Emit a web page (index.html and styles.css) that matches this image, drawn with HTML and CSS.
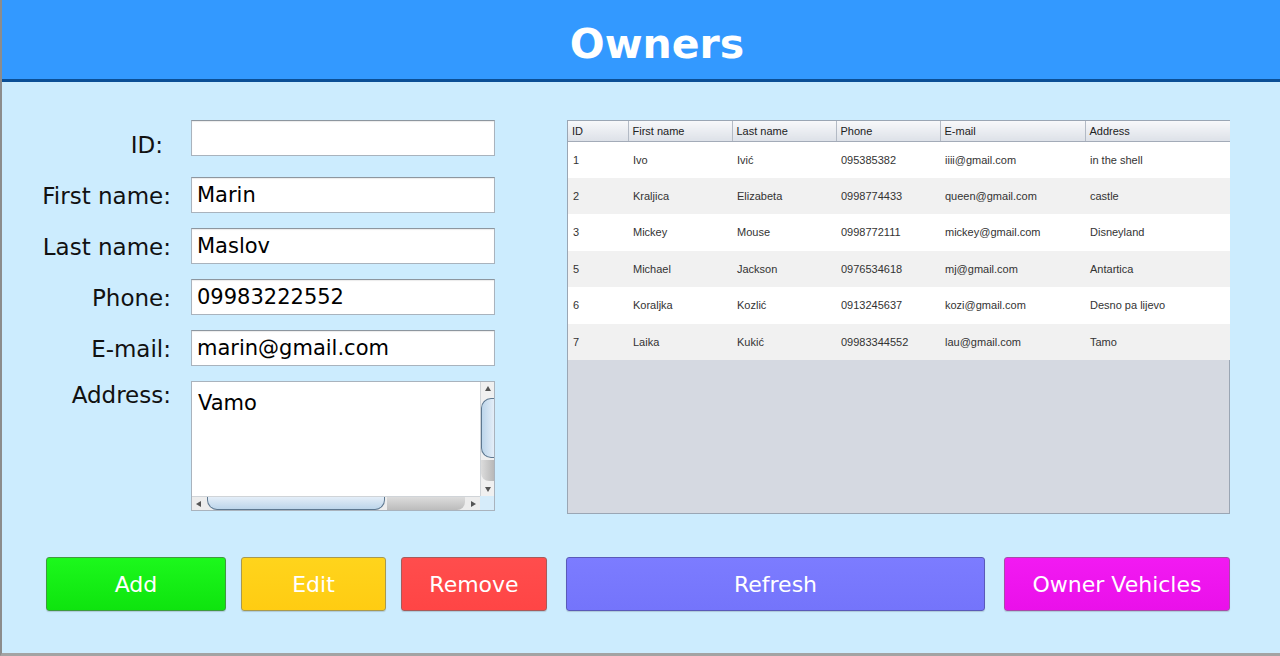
FILE: index.html
```html
<!DOCTYPE html>
<html>
<head>
<meta charset="utf-8">
<link rel="stylesheet" href="styles.css">
</head>
<body>
<div class="window">
  <header class="header"><h1 class="title">Owners</h1></header>
  <main class="main">
    <div class="content">
      <form class="form">
        <label class="label label-id">ID:</label>
        <div class="field field-id"></div>
        <label class="label">First name:</label>
        <div class="field">Marin</div>
        <label class="label">Last name:</label>
        <div class="field">Maslov</div>
        <label class="label">Phone:</label>
        <div class="field">09983222552</div>
        <label class="label">E-mail:</label>
        <div class="field">marin@gmail.com</div>
        <label class="label label-top">Address:</label>
        <div class="textarea">
          <div class="ta-text">Vamo</div>
          <div class="vscroll">
            <span class="arrow arrow-up"></span>
            <span class="vthumb"></span>
            <span class="vrest"></span>
            <span class="arrow arrow-down"></span>
          </div>
          <div class="hscroll">
            <span class="arrow arrow-left"></span>
            <span class="hthumb"></span>
            <span class="hrest"></span>
            <span class="arrow arrow-right"></span>
          </div>
          <div class="corner"></div>
        </div>
      </form>
      <div class="table-wrap">
        <table class="table">
          <colgroup>
            <col class="c-id"><col class="c-mid"><col class="c-mid"><col class="c-mid"><col class="c-wide"><col class="c-wide">
          </colgroup>
          <thead>
            <tr><th>ID</th><th>First name</th><th>Last name</th><th>Phone</th><th>E-mail</th><th>Address</th></tr>
          </thead>
          <tbody>
            <tr><td>1</td><td>Ivo</td><td>Ivić</td><td>095385382</td><td>iiii@gmail.com</td><td>in the shell</td></tr>
            <tr><td>2</td><td>Kraljica</td><td>Elizabeta</td><td>0998774433</td><td>queen@gmail.com</td><td>castle</td></tr>
            <tr><td>3</td><td>Mickey</td><td>Mouse</td><td>0998772111</td><td>mickey@gmail.com</td><td>Disneyland</td></tr>
            <tr><td>5</td><td>Michael</td><td>Jackson</td><td>0976534618</td><td>mj@gmail.com</td><td>Antartica</td></tr>
            <tr><td>6</td><td>Koraljka</td><td>Kozlić</td><td>0913245637</td><td>kozi@gmail.com</td><td>Desno pa lijevo</td></tr>
            <tr><td>7</td><td>Laika</td><td>Kukić</td><td>09983344552</td><td>lau@gmail.com</td><td>Tamo</td></tr>
          </tbody>
        </table>
      </div>
    </div>
    <div class="buttons">
      <button class="btn btn-add">Add</button>
      <button class="btn btn-edit">Edit</button>
      <button class="btn btn-remove">Remove</button>
      <button class="btn btn-refresh">Refresh</button>
      <button class="btn btn-owner">Owner Vehicles</button>
    </div>
  </main>
</div>
</body>
</html>
```
FILE: styles.css
```css
* { box-sizing: border-box; }
html, body { margin: 0; padding: 0; }
body {
  width: 1280px;
  height: 656px;
  overflow: hidden;
  font-family: "DejaVu Sans", Verdana, sans-serif;
  background: #ccecfe;
}
.window {
  width: 1280px;
  height: 656px;
  border-left: 2px solid #8c8c8c;
  border-bottom: 3px solid #a3a3a3;
  display: flex;
  flex-direction: column;
  background: #ccecfe;
}
.header {
  height: 82px;
  flex: none;
  background: #3399ff;
  border-bottom: 3px solid #0b4f96;
  display: flex;
  align-items: center;
  justify-content: center;
  padding-left: 32px;
  padding-top: 10px;
}
.title {
  margin: 0;
  color: #ffffff;
  font-size: 41px;
  font-weight: bold;
  line-height: 1;
}
.main {
  flex: 1;
  display: flex;
  flex-direction: column;
}
.content {
  display: flex;
  align-items: flex-start;
  padding-top: 38px;
}
.form {
  display: grid;
  grid-template-columns: 169px 304px;
  grid-template-rows: 42px 36px 36px 36px 36px 130px;
  column-gap: 20px;
  row-gap: 15px;
  margin: 0;
}
.label {
  display: flex;
  align-items: center;
  justify-content: flex-end;
  font-size: 23px;
  color: #111;
  padding-top: 1px;
}
.label-id {
  align-self: start;
  height: 36px;
  padding-top: 14px;
  padding-right: 8px;
}
.label-top {
  align-items: flex-start;
  padding-top: 0;
  line-height: 28px;
}
.field {
  background: #fff;
  border: 1px solid #a9b3bd;
  border-top-color: #8d969f;
  box-shadow: inset 0 1px 1px rgba(0,0,0,0.08);
  font-size: 21px;
  color: #000;
  padding: 0 5px;
  display: flex;
  align-items: center;
}
.field-id {
  align-self: start;
  height: 36px;
}
.textarea {
  display: grid;
  grid-template-columns: 1fr 14px;
  grid-template-rows: 1fr 14px;
  border: 1px solid #a9b3bd;
  background: #fff;
}
.ta-text {
  font-size: 21px;
  color: #000;
  padding: 8px 6px;
  line-height: 26px;
}
.vscroll {
  display: flex;
  flex-direction: column;
  background: #f0f0f0;
  border-left: 1px solid #d0d4d8;
}
.vthumb {
  height: 60px;
  margin-top: 3px;
  background: linear-gradient(90deg, #bcd5ea, #e4eef8);
  border: 1px solid #5e7890;
  border-right: none;
  border-radius: 10px 0 0 10px;
}
.vrest {
  flex: 1;
  background: linear-gradient(90deg, #dcdcdc, #b8b8b8);
  border-radius: 0 0 0 8px;
  margin: 2px 0 2px 0;
}
.hscroll {
  display: flex;
  background: #ededed;
  border-top: 1px solid #d0d4d8;
}
.hthumb {
  width: 178px;
  margin-left: 2px;
  background: linear-gradient(180deg, #e4eef8, #bcd5ea);
  border: 1px solid #5e7890;
  border-top: none;
  border-radius: 0 0 10px 10px;
}
.hrest {
  flex: 1;
  background: linear-gradient(180deg, #dcdcdc, #bcbcbc);
  border-radius: 0 0 8px 0;
  margin: 0 2px;
}
.corner { background: #d6ecfa; }
.arrow {
  flex: none;
  display: block;
  width: 0;
  height: 0;
  margin: 4px auto;
}
.arrow-up { border-left: 3px solid transparent; border-right: 3px solid transparent; border-bottom: 5px solid #555; }
.arrow-down { border-left: 3px solid transparent; border-right: 3px solid transparent; border-top: 5px solid #555; }
.arrow-left { margin: auto 4px; border-top: 3px solid transparent; border-bottom: 3px solid transparent; border-right: 5px solid #555; }
.arrow-right { margin: auto 4px; border-top: 3px solid transparent; border-bottom: 3px solid transparent; border-left: 5px solid #555; }
.table-wrap {
  margin-left: 72px;
  width: 663px;
  height: 394px;
  border: 1px solid #9aa6b4;
  background: #d5d9e1;
}
.table {
  width: 661px;
  border-collapse: collapse;
  table-layout: fixed;
  font-family: "Liberation Sans", Arial, sans-serif;
  font-size: 11px;
  color: #333;
}
.c-id { width: 60px; }
.c-mid { width: 104px; }
.c-wide { width: 145px; }
.table th {
  height: 20px;
  text-align: left;
  font-weight: normal;
  color: #222;
  padding: 0 4px;
  background: linear-gradient(180deg, #f7f8fa, #dde1e8);
  border-right: 1px solid #b3bac5;
  border-bottom: 1px solid #a3abb8;
}
.table th:last-child { border-right: none; }
.table td {
  height: 36.5px;
  padding: 0 5px;
  background: #fff;
  white-space: nowrap;
}
.table tbody tr:nth-child(even) td { background: #f1f1f1; }
.buttons {
  display: flex;
  gap: 15px;
  padding-left: 44px;
  margin-top: 43px;
}
.btn {
  height: 54px;
  border-radius: 3px;
  font-family: "DejaVu Sans", Verdana, sans-serif;
  font-size: 22px;
  color: #fff;
  padding: 0;
  border: 1px solid rgba(0,0,0,0.3);
  box-shadow: 0 1px 1px rgba(0,0,0,0.15);
}
.btn-add { width: 180px; background: linear-gradient(180deg, #1cf81c, #0ee40e); border-color: #3f9a3f; }
.btn-edit { width: 145px; background: linear-gradient(180deg, #ffd41c, #ffcc12); border-color: #a8994f; }
.btn-remove { width: 146px; background: linear-gradient(180deg, #ff4d4d, #ff4545); border-color: #a85a5a; }
.btn-refresh { width: 419px; margin-left: 4px; background: linear-gradient(180deg, #7c7cff, #7474fb); border-color: #5a5ab8; }
.btn-owner { width: 226px; margin-left: 4px; background: linear-gradient(180deg, #f21af2, #ea10ea); border-color: #a84aa8; }
```
